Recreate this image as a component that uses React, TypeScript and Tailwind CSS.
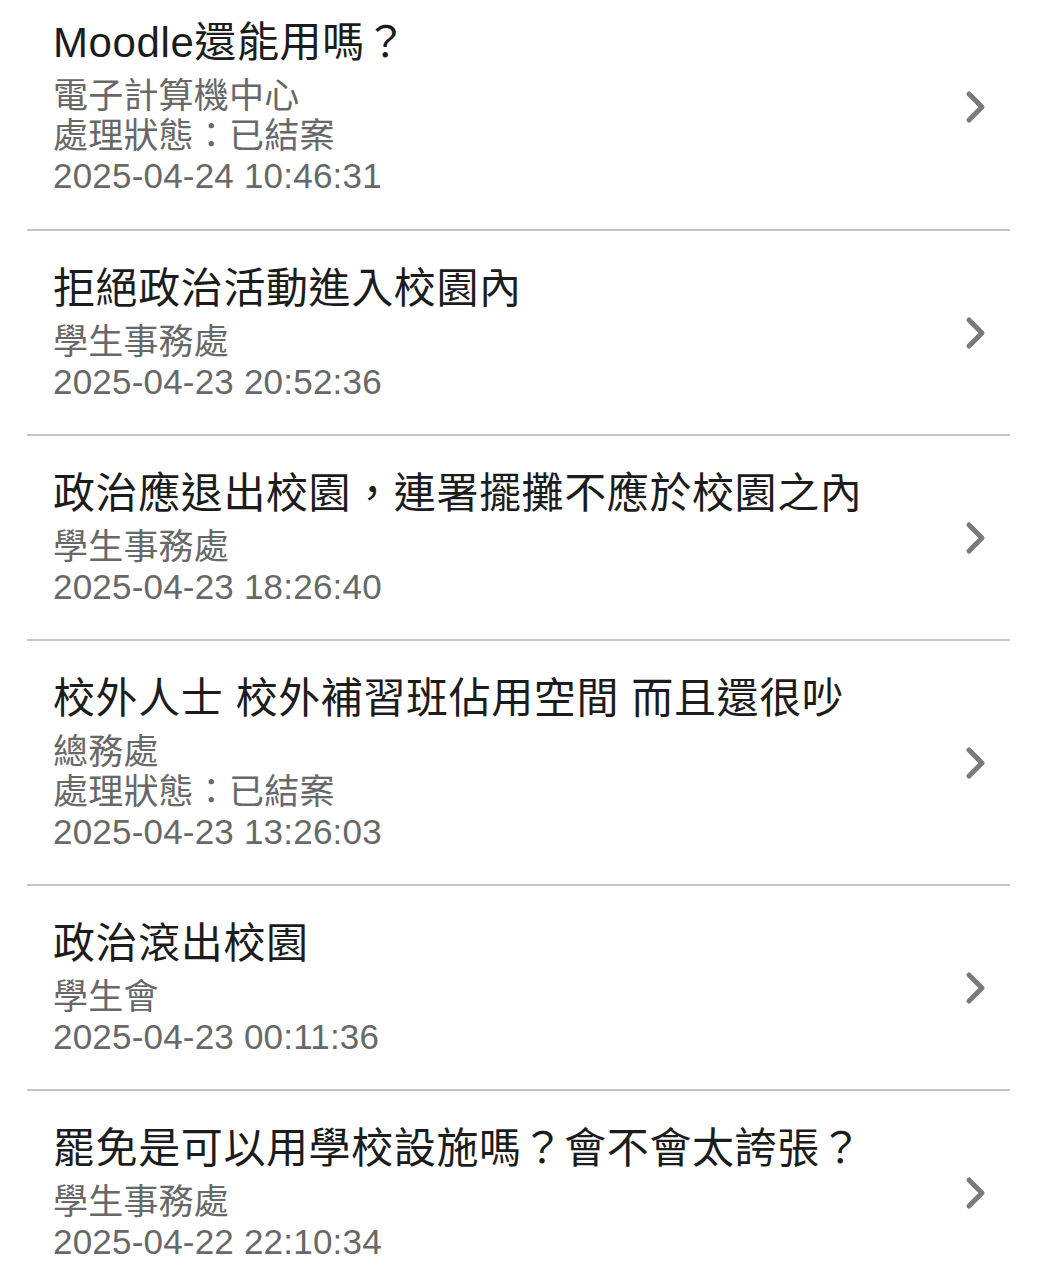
import React from "react";

type Item = { title: string; lines: string[] };

const items: Item[] = [
  { title: "Moodle還能用嗎？", lines: ["電子計算機中心", "處理狀態：已結案", "2025-04-24 10:46:31"] },
  { title: "拒絕政治活動進入校園內", lines: ["學生事務處", "2025-04-23 20:52:36"] },
  { title: "政治應退出校園，連署擺攤不應於校園之內", lines: ["學生事務處", "2025-04-23 18:26:40"] },
  { title: "校外人士 校外補習班佔用空間 而且還很吵", lines: ["總務處", "處理狀態：已結案", "2025-04-23 13:26:03"] },
  { title: "政治滾出校園", lines: ["學生會", "2025-04-23 00:11:36"] },
  { title: "罷免是可以用學校設施嗎？會不會太誇張？", lines: ["學生事務處", "2025-04-22 22:10:34"] },
];

function Chevron() {
  return (
    <svg width="22" height="34" viewBox="0 0 22 34" className="shrink-0">
      <path d="M4 4 L17 17 L4 30" fill="none" stroke="#7a7a7a" strokeWidth="5" strokeLinecap="round" strokeLinejoin="round" />
    </svg>
  );
}

export default function App() {
  return (
    <div
      className="w-[1037px] h-[1280px] overflow-hidden bg-white"
      style={{ fontFamily: '"Liberation Sans", "Noto Sans CJK TC", sans-serif' }}
    >
      <div className="mx-[27px] -mt-[15px]">
        {items.map((it, i) => (
          <div
            key={i}
            className={`flex items-center border-b-2 border-[#c4c4c4] pl-[26px] pr-[23px] pt-[33px] ${i === 0 ? "pb-[33px]" : "pb-[32px]"}`}
          >
            <div className="flex-1 min-w-0">
              <div className="text-[42px] leading-[50px] tracking-[0.6px] text-[#1c1c1c] whitespace-nowrap">{it.title}</div>
              <div className="mt-[8px]">
                {it.lines.map((l, j) => (
                  <div key={j} className="text-[35px] leading-[40px] tracking-[0.2px] text-[#686868] whitespace-nowrap">
                    {l}
                  </div>
                ))}
              </div>
            </div>
            <Chevron />
          </div>
        ))}
      </div>
    </div>
  );
}
